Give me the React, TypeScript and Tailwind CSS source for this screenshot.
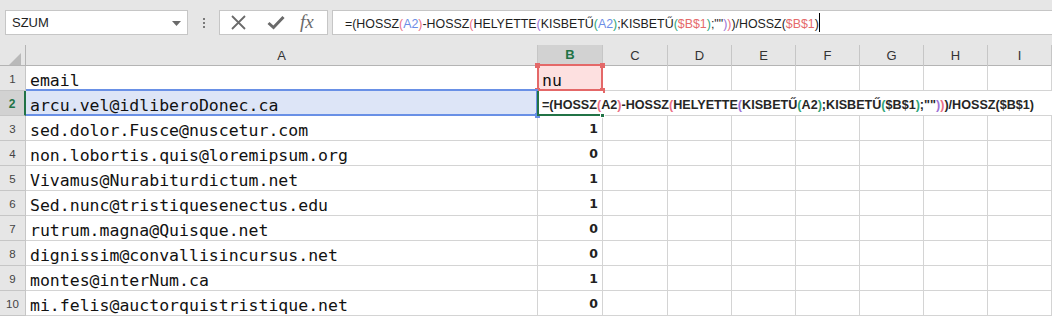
import React from "react";

const GRID = "grid grid-cols-[26px_512px_65px_65px_64px_64px_64px_64px_64px_64px]";

const emails = [
  "email",
  "arcu.vel@idliberoDonec.ca",
  "sed.dolor.Fusce@nuscetur.com",
  "non.lobortis.quis@loremipsum.org",
  "Vivamus@Nurabiturdictum.net",
  "Sed.nunc@tristiquesenectus.edu",
  "rutrum.magna@Quisque.net",
  "dignissim@convallisincursus.net",
  "montes@interNum.ca",
  "mi.felis@auctorquistristique.net",
];
const vals = ["", "", "1", "0", "1", "1", "0", "0", "1", "0"];

const PINK = "text-[#ec6f86]";
const PURPLE = "text-[#9c72d6]";
const GREEN = "text-[#2fa57a]";

function FormulaBarText() {
  return (
    <span className="whitespace-pre text-[#1e1e1e]">
      =(HOSSZ<span className={PINK}>(</span>
      <span className="text-[#6b8ee6]">A2</span>
      <span className={PINK}>)</span>-HOSSZ<span className={PINK}>(</span>HELYETTE
      <span className={PURPLE}>(</span>KISBETŰ<span className={GREEN}>(</span>
      <span className="text-[#6b8ee6]">A2</span>
      <span className={GREEN}>)</span>;KISBETŰ<span className={GREEN}>(</span>
      <span className="text-[#e56a6a]">$B$1</span>
      <span className={GREEN}>)</span>;""<span className={PURPLE}>)</span>
      <span className={PINK}>)</span>)/HOSSZ(
      <span className="text-[#e56a6a]">$B$1</span>)
    </span>
  );
}

function CellFormulaText() {
  return (
    <span className="whitespace-pre text-[#262626]">
      =(HOSSZ<span className={PINK}>(</span>A2<span className={PINK}>)</span>-HOSSZ
      <span className={PINK}>(</span>HELYETTE<span className={PURPLE}>(</span>KISBETŰ
      <span className={GREEN}>(</span>A2<span className={GREEN}>)</span>;KISBETŰ
      <span className={GREEN}>(</span>$B$1<span className={GREEN}>)</span>;""
      <span className={PURPLE}>)</span>
      <span className={PINK}>)</span>)/HOSSZ($B$1)
    </span>
  );
}

function Toolbar() {
  return (
    <div className="h-[45px] bg-[#e6e6e6] flex items-start pt-[10px] font-['Liberation_Sans',sans-serif]">
      <div className="ml-[5px] w-[183px] h-[25px] bg-white border border-[#c6c6c6] flex items-center justify-between pl-[6px] pr-[6px] pt-[1px]">
        <span className="text-[13px] text-[#1e1e1e]">SZUM</span>
        <svg width="9" height="5" viewBox="0 0 9 5">
          <path d="M0 0 L9 0 L4.5 5 Z" fill="#6a6a6a" />
        </svg>
      </div>
      <div className="w-[31px] h-[25px] flex flex-col items-center justify-center gap-[2px]">
        <div className="w-[2px] h-[2px] bg-[#7a7a7a]" />
        <div className="w-[2px] h-[2px] bg-[#7a7a7a]" />
        <div className="w-[2px] h-[2px] bg-[#7a7a7a]" />
      </div>
      <div className="w-[109px] h-[25px] bg-white border border-[#c6c6c6] flex items-center pl-[11px]">
        <svg width="15" height="15" viewBox="0 0 15 15">
          <path d="M1 1 L14 14 M14 1 L1 14" stroke="#6a6a6a" strokeWidth="1.8" fill="none" />
        </svg>
        <svg width="18" height="15" viewBox="0 0 18 15" className="ml-[21px]">
          <path d="M1.5 8 L6.5 12.5 L16.5 2" stroke="#6a6a6a" strokeWidth="3" fill="none" strokeLinejoin="miter" />
        </svg>
        <span className="ml-[15px] font-['Liberation_Serif',serif] italic text-[19px] leading-none text-[#6a6a6a] -mt-[2px]">
          fx
        </span>
      </div>
      <div className="ml-[4px] flex-1 h-[25px] bg-white border border-r-0 border-[#c6c6c6] flex items-center pl-[12px] pt-[3px] text-[12.4px]">
        <FormulaBarText />
        <div className="w-px h-[19px] bg-black -mt-[3px]" />
      </div>
    </div>
  );
}

function HeaderRow() {
  const letters = ["A", "B", "C", "D", "E", "F", "G", "H", "I"];
  return (
    <div className={`${GRID} h-[21px] bg-[#e6e6e6] border-b border-[#b4b4b4] font-['Liberation_Sans',sans-serif]`}>
      <div className="border-r border-[#b4b4b4] flex items-end justify-end pr-[4px] pb-[2px]">
        <svg width="12" height="12" viewBox="0 0 12 12">
          <path d="M12 0 L12 12 L0 12 Z" fill="#b9b9b9" />
        </svg>
      </div>
      {letters.map((l) =>
        l === "B" ? (
          <div
            key={l}
            className="bg-[#d2d2d2] border-r border-[#c6c6c6] border-b-2 border-b-[#217346] flex items-center justify-center text-[13px] font-bold text-[#217346]"
          >
            {l}
          </div>
        ) : (
          <div key={l} className="border-r border-[#c6c6c6] flex items-center justify-center text-[13px] text-[#333]">
            {l}
          </div>
        )
      )}
    </div>
  );
}

function Row({ idx }: { idx: number }) {
  const n = idx + 1;
  const isSel = n === 2;
  const mono = "font-['DejaVu_Sans_Mono',monospace] text-[16.5px] leading-[18px] text-[#111]";
  return (
    <div className={`${GRID} h-[25px]`}>
      {isSel ? (
        <div className="bg-[#d2d2d2] border-r-2 border-r-[#217346] border-b border-[#c6c6c6] flex items-center justify-center font-['Liberation_Sans',sans-serif] text-[12px] font-bold text-[#217346] pt-[2px]">
          {n}
        </div>
      ) : (
        <div className="bg-[#e6e6e6] border-r border-[#b4b4b4] border-b border-[#c6c6c6] flex items-center justify-center font-['Liberation_Sans',sans-serif] text-[11.5px] text-[#444] pt-[3px]">
          {n}
        </div>
      )}
      {/* Column A */}
      {n === 2 ? (
        <div className="relative bg-[#dde5f7] border-b border-r border-[#d4d4d4] flex items-end pl-[4px]">
          <span className={mono}>{emails[idx]}</span>
          <div className="absolute left-0 -top-[2px] -right-[1px] -bottom-[1px] border-2 border-l-0 border-[#6990e6] pointer-events-none" />
          <div className="absolute -right-[3px] -bottom-[3px] w-[5px] h-[5px] bg-[#6990e6]" />
        </div>
      ) : (
        <div className="border-b border-r border-[#d4d4d4] flex items-end pl-[4px]">
          <span className={mono}>{emails[idx]}</span>
        </div>
      )}
      {/* Column B */}
      {n === 1 ? (
        <div className="relative bg-[#fde0e0] border-b border-r border-[#d4d4d4] flex items-end pl-[4px]">
          <span className={mono}>nu</span>
          <div className="absolute -left-[1px] -top-[2px] -right-[1px] -bottom-[1px] border-2 border-[#e46868] pointer-events-none" />
          <div className="absolute -left-[3px] -top-[3px] w-[5px] h-[5px] bg-[#e46868]" />
          <div className="absolute -right-[3px] -top-[3px] w-[5px] h-[5px] bg-[#e46868]" />
          <div className="absolute -left-[3px] -bottom-[3px] w-[5px] h-[5px] bg-[#e46868]" />
          <div className="absolute -right-[3px] -bottom-[3px] w-[5px] h-[5px] bg-[#e46868]" />
        </div>
      ) : n === 2 ? (
        <div className="relative z-10 bg-white border-b border-[#d4d4d4] flex items-end pl-[4px] pb-[2px] overflow-visible">
          <span className="font-['Liberation_Sans',sans-serif] font-bold text-[12.6px] leading-[15px]">
            <CellFormulaText />
          </span>
          <div className="absolute -left-[1px] top-0 w-[2px] -bottom-[1px] bg-[#217346]" />
          <div className="absolute -left-[1px] -bottom-[1px] w-[63px] h-[2px] bg-[#217346]" />
          <div className="absolute -right-[2px] -bottom-[3px] w-[5px] h-[5px] bg-[#217346] border border-white" />
        </div>
      ) : (
        <div className="border-b border-r border-[#d4d4d4] flex items-end justify-end pr-[4px] pb-[4px]">
          <span className="font-['DejaVu_Sans',sans-serif] font-bold text-[12.5px] leading-[14px] text-[#222]">
            {vals[idx]}
          </span>
        </div>
      )}
      {/* Columns C..I */}
      {[0, 1, 2, 3, 4, 5, 6].map((k) =>
        n === 2 ? (
          <div key={k} className="border-b border-[#d4d4d4]" />
        ) : (
          <div key={k} className="border-b border-r border-[#d4d4d4]" />
        )
      )}
    </div>
  );
}

export default function App() {
  return (
    <div className="w-[1052px] h-[316px] overflow-hidden bg-white">
      <Toolbar />
      <HeaderRow />
      {emails.map((_, i) => (
        <Row key={i} idx={i} />
      ))}
    </div>
  );
}
